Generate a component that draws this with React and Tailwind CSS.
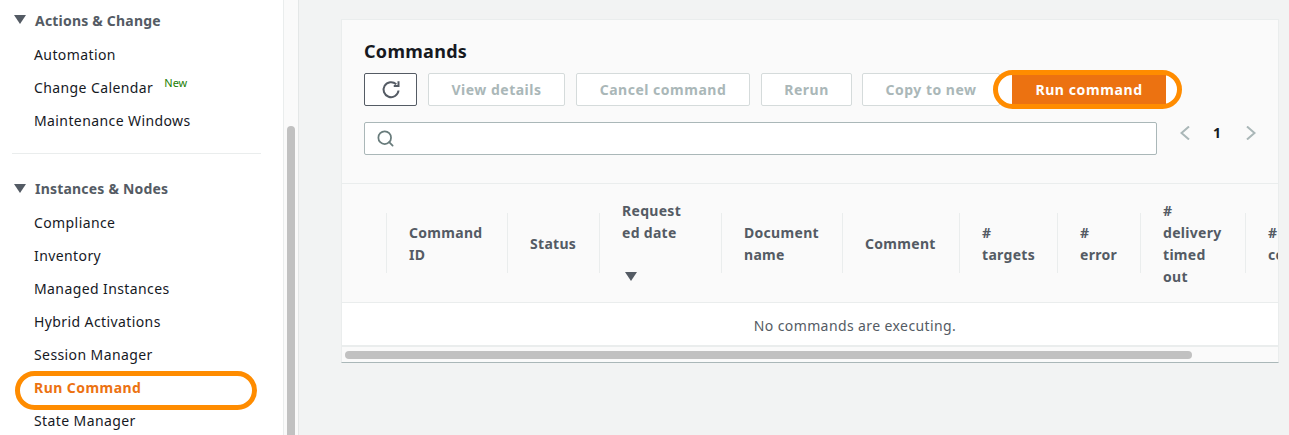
import { Search } from 'lucide-react';

const font = "font-['Noto_Sans','Open_Sans',sans-serif]";

function Caret({ className }) {
  return (
    <svg viewBox="0 0 12 10" className={className} fill="#545b64">
      <polygon points="0,0 12,0 6,9" />
    </svg>
  );
}

function NavItem({ children }) {
  return <div className="h-[33px] pl-[34px] flex items-center text-[14px] tracking-[0.4px] text-[#16191f] whitespace-nowrap">{children}</div>;
}

function NavHeader({ children, className }) {
  return (
    <div className={`flex items-center pl-[14px] gap-[9px] text-[14px] tracking-[0.2px] font-bold text-[#545b64] whitespace-nowrap ${className}`}>
      <Caret className="w-3 h-[10px]" />
      {children}
    </div>
  );
}

function Sidebar() {
  return (
    <div className="w-[284px] shrink-0 bg-white border-r border-[#eaeded]">
      <NavHeader className="h-[38px] pt-[2px]">Actions &amp; Change</NavHeader>
      <NavItem>Automation</NavItem>
      <NavItem>
        Change Calendar
        <span className="ml-[11px] -mt-2 text-[11px] tracking-normal text-[#1d8102]">New</span>
      </NavItem>
      <NavItem>Maintenance Windows</NavItem>
      <div className="mt-4 ml-3 w-[249px] border-t border-[#eaeded]" />
      <NavHeader className="h-[35px] mt-[17px]">Instances &amp; Nodes</NavHeader>
      <NavItem>Compliance</NavItem>
      <NavItem>Inventory</NavItem>
      <NavItem>Managed Instances</NavItem>
      <NavItem>Hybrid Activations</NavItem>
      <NavItem>Session Manager</NavItem>
      <div className="relative h-[33px] pl-[34px] flex items-center text-[14px] tracking-[0.45px] font-bold text-[#ec7211]">
        Run Command
        <div className="absolute left-[15px] top-0 w-[242px] h-[39px] rounded-[20px] border-[5px] border-[#ff8c00]" />
      </div>
      <NavItem>State Manager</NavItem>
    </div>
  );
}

function Btn({ children, className }) {
  return (
    <div className={`h-[33px] flex items-center justify-center bg-white border border-[#d5dbdb] rounded-[2px] text-[14px] tracking-[0.5px] font-bold text-[#aab7b8] whitespace-nowrap ${className}`}>
      {children}
    </div>
  );
}

const columns = [
  { w: 'w-[121px]', lines: ['Command', 'ID'] },
  { w: 'w-[92px]', lines: ['Status'] },
  { w: 'w-[122px]', lines: ['Request', 'ed date'], sorted: true },
  { w: 'w-[121px]', lines: ['Document', 'name'] },
  { w: 'w-[117px]', lines: ['Comment'] },
  { w: 'w-[98px]', lines: ['#', 'targets'] },
  { w: 'w-[83px]', lines: ['#', 'error'] },
  { w: 'w-[105px]', lines: ['#', 'delivery', 'timed', 'out'] },
  { w: 'w-[100px]', lines: ['#', 'co'] },
];

function TableHead() {
  return (
    <div className="h-[120px] flex items-center pl-[44px] border-y border-[#eaeded] overflow-hidden">
      {columns.map((col) => (
        <div key={col.lines.join(' ')} className={`${col.w} shrink-0 flex items-center`}>
          <div className="w-px h-[60px] shrink-0 bg-[#eaeded]" />
          <div className="pl-[22px] mt-[2px] text-[14px] leading-[22px] tracking-[0.3px] font-bold text-[#545b64] whitespace-nowrap">
            {col.lines.map((l) => <div key={l}>{l}</div>)}
            {col.sorted && (
              <div className="h-[44px] pt-[28px] pl-[3px]"><Caret className="w-[12px] h-[10px]" /></div>
            )}
          </div>
        </div>
      ))}
    </div>
  );
}

export default function App() {
  return (
    <div className={`h-[435px] w-full flex overflow-hidden bg-[#f2f3f3] ${font}`}>
      <Sidebar />
      <div className="w-[15px] shrink-0 bg-[#fafafa] border-r border-[#e4e7e7] flex flex-col pl-[3px] pt-[126px]">
        <div className="w-2 flex-1 bg-[#c1c1c1] rounded-t-[4px]" />
      </div>
      <div className="flex-1 min-w-0 pt-[19px] pl-[42px] pr-[10px]">
        <div className="bg-[#fafafa] border-x border-t border-[#eaeded] border-b-[#aab7b8] border-b overflow-hidden">
          <div className="h-[163px] pl-[22px]">
            <div className="h-[53px] pt-[18px] text-[18px] leading-[26px] tracking-[0.3px] font-bold text-[#16191f]">Commands</div>
            <div className="flex items-center">
              <div className="w-[53px] h-[33px] flex items-center justify-center bg-white border border-[#545b64] rounded-[2px]">
                <svg viewBox="0 0 16 16" className="w-[20px] h-[20px]" fill="none" stroke="#545b64" strokeWidth="1.6">
                  <path d="M14 8.4A6 6 0 1 1 12.2 3.4" />
                  <path d="M14 1v3.8h-3.8" />
                </svg>
              </div>
              <Btn className="w-[137px] ml-[11px]">View details</Btn>
              <Btn className="w-[174px] ml-[11px]">Cancel command</Btn>
              <Btn className="w-[91px] ml-[11px]">Rerun</Btn>
              <Btn className="w-[138px] ml-[10px]">Copy to new</Btn>
              <div className="relative ml-[12px] w-[154px] h-[29px]">
                <div className="absolute -left-[19px] -top-[5px] w-[189px] h-[39px] rounded-[20px] bg-white border-[5px] border-[#ff8c00]" />
                <div className="relative h-full bg-[#ec7211] flex items-center justify-center text-[14px] tracking-[0.6px] font-bold text-white whitespace-nowrap">
                  Run command
                </div>
              </div>
            </div>
            <div className="mt-[16px] flex items-start">
              <div className="w-[793px] h-[33px] flex items-center pl-[11px] bg-white border border-[#aab7b8] rounded-[2px]">
                <Search size={19} color="#687b7b" strokeWidth={2.2} />
              </div>
              <svg viewBox="0 0 10 14" className="w-[10px] h-[14px] ml-[23px] mt-[4px]" fill="none" stroke="#aab7b8" strokeWidth="2">
                <path d="M9 0.5L1.5 7L9 13.5" />
              </svg>
              <span className="ml-[23px] text-[14px] leading-[22px] font-bold text-[#16191f]">1</span>
              <svg viewBox="0 0 10 14" className="w-[10px] h-[14px] ml-[25px] mt-[4px]" fill="none" stroke="#aab7b8" strokeWidth="2">
                <path d="M1 0.5L8.5 7L1 13.5" />
              </svg>
            </div>
          </div>
          <TableHead />
          <div className="h-[44px] pt-[2px] pl-[90px] bg-white flex items-center justify-center text-[14px] tracking-[0.4px] text-[#545b64] border-b-2 border-[#eaeded]">
            No commands are executing.
          </div>
          <div className="h-[15px] bg-[#fafafa] pl-[3px] flex items-center">
            <div className="w-[847px] h-2 rounded-full bg-[#c1c1c1]" />
          </div>
        </div>
      </div>
    </div>
  );
}
